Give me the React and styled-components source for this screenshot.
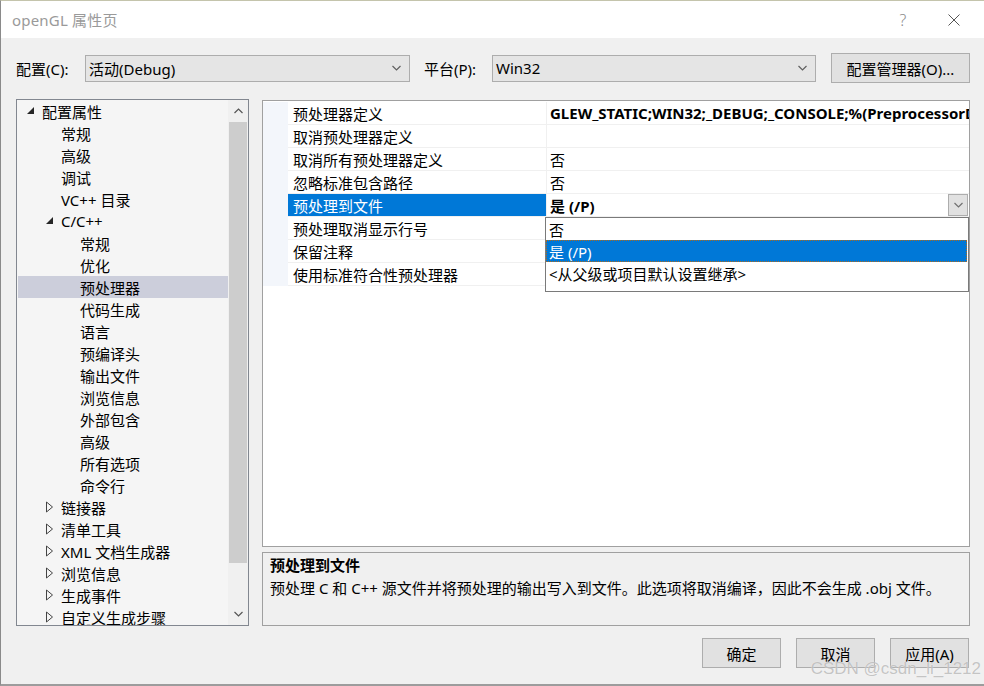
import React from 'react';
import styled, { createGlobalStyle } from 'styled-components';

const GlobalStyle = createGlobalStyle`
  html, body {
    margin: 0;
    padding: 0;
  }
  body {
    width: 984px;
    height: 686px;
    overflow: hidden;
    background: #fff;
    color: #000;
    font-family: "Noto Sans", "Noto Sans CJK SC", sans-serif;
    font-size: 15px;
  }
`;

const Window = styled.div`
  position: relative;
  width: 984px;
  height: 686px;
  box-sizing: border-box;
  border-top: 1px solid #c4c4ac;
  border-left: 1px solid #8a8a8a;
  border-bottom: 2px solid #9c9c9c;
  background: #f0f0f0;
  display: flex;
  flex-direction: column;
`;

const TitleBar = styled.div`
  height: 37px;
  flex: none;
  background: #fff;
  display: flex;
  align-items: center;
  padding-left: 11px;
  padding-right: 7px;
`;

const TitleText = styled.div`
  color: #9a9a9a;
  font-size: 15px;
  letter-spacing: 0.2px;
`;

const TitleButton = styled.div`
  width: 46px;
  height: 37px;
  display: flex;
  align-items: center;
  justify-content: center;
  color: #8a8a8a;
  font-size: 16px;
  font-weight: 300;
  margin-left: ${({ $first }) => ($first ? 'auto' : '5px')};
`;

const ConfigRow = styled.div`
  display: flex;
  align-items: center;
  height: 30px;
  margin-top: 15px;
  padding-left: 15px;
`;

const Label = styled.div`
  width: ${({ $w }) => $w}px;
  flex: none;
  white-space: nowrap;
`;

const Select = styled.div`
  width: ${({ $w }) => $w}px;
  height: 27px;
  box-sizing: border-box;
  border: 1px solid #adadad;
  background: #e5e5e5;
  display: flex;
  align-items: center;
  padding: 0 8px 0 3px;
  margin-right: ${({ $mr }) => $mr || 0}px;
  flex: none;
`;

const SelectText = styled.span`
  flex: 1;
`;

const Button = styled.div`
  width: ${({ $w }) => $w}px;
  height: 30px;
  box-sizing: border-box;
  border: 1px solid #adadad;
  background: #e1e1e1;
  display: flex;
  align-items: center;
  justify-content: center;
  flex: none;
  white-space: nowrap;
`;

const Main = styled.div`
  display: flex;
  margin-top: 16px;
  padding-left: 15px;
  gap: 13px;
  height: 527px;
`;

const TreePanel = styled.div`
  width: 233px;
  height: 527px;
  box-sizing: border-box;
  border: 1px solid #828790;
  background: #f5f5f5;
  display: flex;
  overflow: hidden;
`;

const TreeList = styled.div`
  flex: 1;
  padding: 0 0 0 1px;
  overflow: hidden;
`;

const TreeRow = styled.div`
  height: 22px;
  display: flex;
  align-items: center;
  padding-left: ${({ $level }) => 5 + $level * 19}px;
  background: ${({ $selected }) => ($selected ? '#cccedb' : 'transparent')};
  white-space: nowrap;
`;

const Expander = styled.div`
  width: 19px;
  height: 22px;
  flex: none;
  display: flex;
  align-items: center;
  padding-left: 4px;
  box-sizing: border-box;
`;

const ScrollBar = styled.div`
  width: 20px;
  flex: none;
  display: flex;
  flex-direction: column;
  background: #f0f0f0;
`;

const ScrollArrow = styled.div`
  height: 22px;
  flex: none;
  display: flex;
  align-items: center;
  justify-content: center;
`;

const ScrollTrack = styled.div`
  flex: 1;
  padding: 0 1px;
`;

const ScrollThumb = styled.div`
  height: 441px;
  background: #cdcdcd;
`;

const RightColumn = styled.div`
  width: 708px;
  display: flex;
  flex-direction: column;
  gap: 5px;
  margin-top: 1px;
`;

const Grid = styled.div`
  height: 447px;
  box-sizing: border-box;
  border: 1px solid #a0a0a0;
  padding-top: 1px;
  background: #fff;
`;

const GridRow = styled.div`
  display: grid;
  grid-template-columns: 25px 258px 1fr;
  height: 23px;
  box-sizing: border-box;
  border-bottom: 1px solid #f0f0f0;
`;

const Margin = styled.div`
  background: #f3f6fb;
  margin-bottom: -1px;
`;

const NameCell = styled.div`
  display: flex;
  align-items: center;
  padding-left: 5px;
  white-space: nowrap;
  background: ${({ $selected }) => ($selected ? '#0078d7' : 'transparent')};
  color: ${({ $selected }) => ($selected ? '#fff' : '#000')};
`;

const ValueCell = styled.div`
  position: relative;
  display: flex;
  align-items: center;
  padding-left: 3px;
  border-left: 1px solid #f0f0f0;
  white-space: nowrap;
  overflow: ${({ $open }) => ($open ? 'visible' : 'hidden')};
  font-weight: ${({ $bold }) => ($bold ? 700 : 400)};
  min-width: 0;
`;

const ValueText = styled.span`
  flex: 1;
  overflow: hidden;
`;

const DropButton = styled.div`
  width: 20px;
  height: 22px;
  box-sizing: border-box;
  border: 1px solid #adadad;
  background: #e1e1e1;
  display: flex;
  align-items: center;
  justify-content: center;
  margin-right: 1px;
  flex: none;
`;

const DropList = styled.div`
  position: absolute;
  top: 23px;
  left: -2px;
  right: 0;
  height: 75px;
  box-sizing: border-box;
  border: 1px solid #7a7a7a;
  background: #fff;
  font-weight: 400;
  z-index: 2;
`;

const DropItem = styled.div`
  height: 22px;
  display: flex;
  align-items: center;
  padding-left: 3px;
  margin-right: 1px;
  background: ${({ $active }) => ($active ? '#0078d7' : 'transparent')};
  color: ${({ $active }) => ($active ? '#fff' : '#000')};
  outline: ${({ $active }) => ($active ? '1px dotted #b06a1a' : 'none')};
  outline-offset: -1px;
`;

const Description = styled.div`
  height: 74px;
  box-sizing: border-box;
  border: 1px solid #a0a0a0;
  background: #f0f0f0;
  padding: 1px 7px;
  line-height: 23px;
`;

const DescTitle = styled.div`
  font-weight: 700;
`;

const Footer = styled.div`
  display: flex;
  justify-content: flex-end;
  gap: 15px;
  margin-top: 12px;
  padding-right: 15px;
`;

const Watermark = styled.div`
  position: absolute;
  right: 3px;
  bottom: 5px;
  font-family: "Liberation Sans", Arial, sans-serif;
  font-size: 17px;
  color: rgba(160, 160, 160, 0.6);
  text-shadow: 0 0 1px rgba(255, 255, 255, 0.8);
  pointer-events: none;
`;

const Chevron = ({ up, color = '#606060', w = 9 }) => (
  <svg width={w} height="6" viewBox="0 0 9 6">
    <polyline
      points={up ? '0.5,5 4.5,1 8.5,5' : '0.5,1 4.5,5 8.5,1'}
      fill="none"
      stroke={color}
      strokeWidth="1.2"
    />
  </svg>
);

const OpenArrow = () => (
  <svg width="8" height="14" viewBox="0 0 8 14">
    <polygon points="7,3 7,10 0,10" fill="#262626" />
  </svg>
);

const ClosedArrow = () => (
  <svg width="8" height="12" viewBox="0 0 8 12">
    <polygon points="0.5,1 6.5,6 0.5,11" fill="none" stroke="#444" strokeWidth="1" />
  </svg>
);

const treeItems = [
  { label: '配置属性', level: 0, exp: 'open' },
  { label: '常规', level: 1 },
  { label: '高级', level: 1 },
  { label: '调试', level: 1 },
  { label: 'VC++ 目录', level: 1 },
  { label: 'C/C++', level: 1, exp: 'open' },
  { label: '常规', level: 2 },
  { label: '优化', level: 2 },
  { label: '预处理器', level: 2, selected: true },
  { label: '代码生成', level: 2 },
  { label: '语言', level: 2 },
  { label: '预编译头', level: 2 },
  { label: '输出文件', level: 2 },
  { label: '浏览信息', level: 2 },
  { label: '外部包含', level: 2 },
  { label: '高级', level: 2 },
  { label: '所有选项', level: 2 },
  { label: '命令行', level: 2 },
  { label: '链接器', level: 1, exp: 'closed' },
  { label: '清单工具', level: 1, exp: 'closed' },
  { label: 'XML 文档生成器', level: 1, exp: 'closed' },
  { label: '浏览信息', level: 1, exp: 'closed' },
  { label: '生成事件', level: 1, exp: 'closed' },
  { label: '自定义生成步骤', level: 1, exp: 'closed' },
];

// rows 5..7 sit under the open drop-down, so their values are not shown
const props = [
  { name: '预处理器定义', value: 'GLEW_STATIC;WIN32;_DEBUG;_CONSOLE;%(PreprocessorDefinitions)', bold: true },
  { name: '取消预处理器定义', value: '' },
  { name: '取消所有预处理器定义', value: '否' },
  { name: '忽略标准包含路径', value: '否' },
  { name: '预处理到文件', value: '是 (/P)', bold: true, selected: true },
  { name: '预处理取消显示行号', value: '' },
  { name: '保留注释', value: '' },
  { name: '使用标准符合性预处理器', value: '' },
];

const options = ['否', '是 (/P)', '<从父级或项目默认设置继承>'];

export default function App() {
  return (
    <>
      <GlobalStyle />
      <Window>
        <TitleBar>
          <TitleText>openGL 属性页</TitleText>
          <TitleButton $first>?</TitleButton>
          <TitleButton>
            <svg width="12" height="12" viewBox="0 0 12 12">
              <path d="M0.5 0.5 L11.5 11.5 M11.5 0.5 L0.5 11.5" stroke="#555" strokeWidth="1" />
            </svg>
          </TitleButton>
        </TitleBar>

        <ConfigRow>
          <Label $w={69}>配置(C):</Label>
          <Select $w={325} $mr={14}>
            <SelectText>活动(Debug)</SelectText>
            <Chevron />
          </Select>
          <Label $w={68}>平台(P):</Label>
          <Select $w={324} $mr={15}>
            <SelectText>Win32</SelectText>
            <Chevron />
          </Select>
          <Button $w={139}>配置管理器(O)...</Button>
        </ConfigRow>

        <Main>
          <TreePanel>
            <TreeList>
              {treeItems.map((item, i) => (
                <TreeRow key={i} $level={item.level} $selected={item.selected}>
                  <Expander>
                    {item.exp === 'open' && <OpenArrow />}
                    {item.exp === 'closed' && <ClosedArrow />}
                  </Expander>
                  {item.label}
                </TreeRow>
              ))}
            </TreeList>
            <ScrollBar>
              <ScrollArrow>
                <Chevron up color="#555" />
              </ScrollArrow>
              <ScrollTrack>
                <ScrollThumb />
              </ScrollTrack>
              <ScrollArrow>
                <Chevron color="#555" />
              </ScrollArrow>
            </ScrollBar>
          </TreePanel>

          <RightColumn>
            <Grid>
              {props.map((p, i) => (
                <GridRow key={i}>
                  <Margin />
                  <NameCell $selected={p.selected}>{p.name}</NameCell>
                  <ValueCell $bold={p.bold} $open={p.selected}>
                    <ValueText>{p.value}</ValueText>
                    {p.selected && (
                      <>
                        <DropButton>
                          <Chevron color="#707070" />
                        </DropButton>
                        <DropList>
                          {options.map((o, j) => (
                            <DropItem key={j} $active={j === 1}>{o}</DropItem>
                          ))}
                        </DropList>
                      </>
                    )}
                  </ValueCell>
                </GridRow>
              ))}
            </Grid>
            <Description>
              <DescTitle>预处理到文件</DescTitle>
              <div>预处理 C 和 C++ 源文件并将预处理的输出写入到文件。此选项将取消编译，因此不会生成 .obj 文件。</div>
            </Description>
          </RightColumn>
        </Main>

        <Footer>
          <Button $w={79}>确定</Button>
          <Button $w={79}>取消</Button>
          <Button $w={79}>应用(A)</Button>
        </Footer>

        <Watermark>CSDN @csdn_li_1212</Watermark>
      </Window>
    </>
  );
}
